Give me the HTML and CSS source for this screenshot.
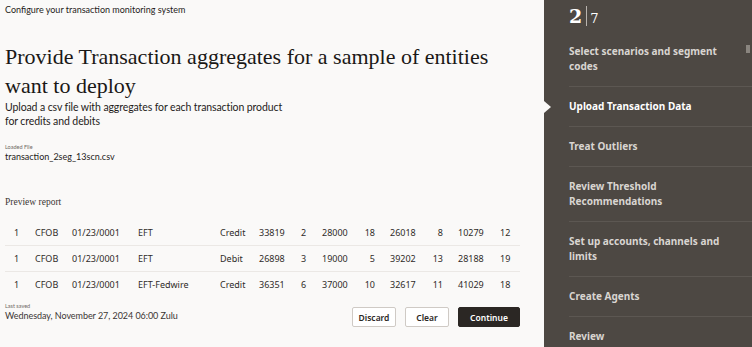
FILE: index.html
```html
<!DOCTYPE html>
<html lang="en">
<head>
<meta charset="utf-8"/>
<title>Configure transaction monitoring</title>
<link rel="stylesheet" href="styles.css">
</head>
<body>
<div class="page">
  <div class="main">
    <div class="crumb">Configure your transaction monitoring system</div>
    <h1 class="title">Provide Transaction aggregates for a sample of entities want to deploy</h1>
    <p class="subtitle">Upload a csv file with aggregates for each transaction product<br>for credits and debits</p>
    <div class="field">
      <div class="field-label">Loaded File</div>
      <div class="field-value">transaction_2seg_13scn.csv</div>
    </div>
    <div class="preview-title">Preview report</div>
    <table class="preview">
      <colgroup>
        <col style="width:30px"><col style="width:37px"><col style="width:66px"><col style="width:82px">
        <col style="width:39px"><col style="width:42px"><col style="width:21px"><col style="width:42px">
        <col style="width:26px"><col style="width:41px"><col style="width:27px"><col style="width:42px"><col>
      </colgroup>
      <tbody>
        <tr>
          <td class="first">1</td><td>CFOB</td><td>01/23/0001</td><td>EFT</td><td>Credit</td><td>33819</td><td>2</td><td>28000</td><td class="num">18</td><td>26018</td><td class="num">8</td><td>10279</td><td>12</td>
        </tr>
        <tr>
          <td class="first">1</td><td>CFOB</td><td>01/23/0001</td><td>EFT</td><td>Debit</td><td>26898</td><td>3</td><td>19000</td><td class="num">5</td><td>39202</td><td class="num">13</td><td>28188</td><td>19</td>
        </tr>
        <tr>
          <td class="first">1</td><td>CFOB</td><td>01/23/0001</td><td>EFT-Fedwire</td><td>Credit</td><td>36351</td><td>6</td><td>37000</td><td class="num">10</td><td>32617</td><td class="num">11</td><td>41029</td><td>18</td>
        </tr>
      </tbody>
    </table>
    <div class="footer">
      <div class="saved">
        <div class="field-label">Last saved</div>
        <div class="saved-value">Wednesday, November 27, 2024 06:00 Zulu</div>
      </div>
      <div class="actions">
        <button class="btn">Discard</button>
        <button class="btn">Clear</button>
        <button class="btn primary">Continue</button>
      </div>
    </div>
  </div>
  <div class="steps">
    <div class="counter"><span class="cur">2</span><span class="sep"></span><span class="total">7</span></div>
    <div class="scroll-thumb"></div>
    <ul class="step-list">
      <li>Select scenarios and segment<br>codes</li>
      <li class="active">Upload Transaction Data</li>
      <li>Treat Outliers</li>
      <li>Review Threshold<br>Recommendations</li>
      <li>Set up accounts, channels and<br>limits</li>
      <li>Create Agents</li>
      <li>Review</li>
    </ul>
  </div>
</div>
</body>
</html>
```

FILE: styles.css
```css
body {
  margin: 0;
  background: #faf9f8;
  font-family: Lato, "Noto Sans", sans-serif;
  color: #1f1c1a;
  overflow: hidden;
}
.page {
  display: flex;
  height: 347px;
}
.main {
  width: 539px;
  padding: 4px 0 0 5px;
  box-sizing: border-box;
}
.crumb {
  font-size: 9px;
  line-height: 12px;
}
.title {
  font-family: "Liberation Serif", serif;
  font-weight: normal;
  font-size: 22px;
  line-height: 29px;
  margin: 26px 0 0;
  width: 505px;
  color: #1a1816;
}
.subtitle {
  font-size: 10.5px;
  letter-spacing: -0.1px;
  line-height: 14px;
  margin: 0;
}
.field {
  margin-top: 15px;
}
.field-label {
  font-size: 5.5px;
  line-height: 8px;
  color: #6f6a66;
}
.field-value {
  font-size: 9px;
  line-height: 12px;
}
.preview-title {
  font-family: "Liberation Serif", serif;
  font-size: 9.5px;
  margin-top: 34px;
  color: #3a3634;
}
.preview {
  border-collapse: collapse;
  table-layout: fixed;
  width: 515px;
  margin-top: 13px;
  font-family: "Noto Sans", sans-serif;
  font-size: 9px;
  color: #2f2b28;
}
.preview td {
  height: 25px;
  padding: 0;
  border-bottom: 1px solid #ebe8e5;
  white-space: nowrap;
}
.preview tr:last-child td {
  border-bottom: none;
}
.preview td.first {
  padding-left: 9px;
}
.preview td.num {
  text-align: right;
  padding-right: 15px;
}
.footer {
  display: flex;
  justify-content: space-between;
  align-items: flex-start;
  width: 515px;
  margin-top: 5px;
}
.saved-value {
  font-size: 9px;
  letter-spacing: -0.05px;
  line-height: 12px;
  color: #3a3634;
}
.actions {
  display: flex;
  gap: 9px;
  margin-top: 5px;
}
.btn {
  font-family: "Noto Sans", sans-serif;
  font-size: 8.5px;
  font-weight: 600;
  height: 20px;
  padding: 0;
  width: 44px;
  background: #fff;
  border: 1px solid #cfcac5;
  border-radius: 2px;
  color: #2b2724;
}
.btn.primary {
  width: 62px;
  background: #2b2724;
  border-color: #2b2724;
  color: #fff;
}
.steps {
  position: relative;
  flex: 1;
  margin-left: 5px;
  background: #4d4843;
  color: #d9d5d1;
  padding-left: 25px;
}
.counter {
  display: flex;
  align-items: flex-end;
  height: 26px;
  margin-top: 1px;
  color: #fff;
}
.counter .cur {
  font-family: "DejaVu Serif", serif;
  font-weight: bold;
  font-size: 19px;
  line-height: 22px;
}
.counter .sep {
  width: 1px;
  height: 20px;
  background: #b9b4af;
  margin: 0 3px 1px 4px;
}
.counter .total {
  font-family: "DejaVu Serif", serif;
  font-size: 13px;
  line-height: 16px;
}
.scroll-thumb {
  position: absolute;
  right: 2px;
  top: 45px;
  width: 4px;
  height: 8px;
  background: #8a857f;
}
.step-list {
  list-style: none;
  margin: 5px 0 0;
  padding: 0;
}
.step-list li {
  position: relative;
  font-family: "Noto Sans", sans-serif;
  font-size: 10px;
  font-weight: 700;
  line-height: 15px;
  padding: 12px 0 12px;
  border-bottom: 1px solid #5c5752;
}
.step-list li.active {
  color: #fff;
}
.step-list li.active::before {
  content: "";
  position: absolute;
  left: -25px;
  top: 14px;
  border-style: solid;
  border-width: 6px 0 6px 7px;
  border-color: transparent transparent transparent #faf9f8;
}
```
